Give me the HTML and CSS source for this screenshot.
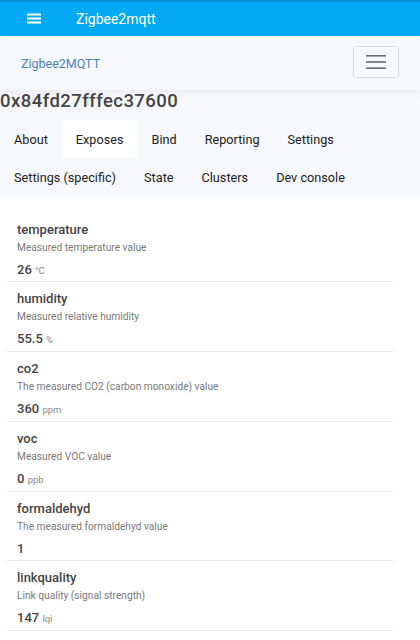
FILE: index.html
```html
<!DOCTYPE html>
<html>
<head>
<meta charset="utf-8">
<link rel="stylesheet" href="styles.css">
</head>
<body>
<header class="appbar">
  <svg class="appbar-menu" width="14" height="11" viewBox="0 0 14 11"><rect x="0" y="0.5" width="14" height="2" fill="#fff"/><rect x="0" y="4.5" width="14" height="2" fill="#fff"/><rect x="0" y="8.5" width="14" height="2" fill="#fff"/></svg>
  <span class="appbar-title">Zigbee2mqtt</span>
</header>
<nav class="navbar">
  <a class="brand">Zigbee2MQTT</a>
  <button class="toggler"><svg width="20" height="18" viewBox="0 0 20 18"><rect x="0" y="2" width="20" height="1.6" fill="#6c6c6c"/><rect x="0" y="8.2" width="20" height="1.6" fill="#6c6c6c"/><rect x="0" y="14.4" width="20" height="1.6" fill="#6c6c6c"/></svg></button>
</nav>
<h1 class="device-title">0x84fd27fffec37600</h1>
<ul class="tabs">
  <li class="tab">About</li>
  <li class="tab active">Exposes</li>
  <li class="tab">Bind</li>
  <li class="tab">Reporting</li>
  <li class="tab">Settings</li>
  <li class="tab">Settings (specific)</li>
  <li class="tab">State</li>
  <li class="tab">Clusters</li>
  <li class="tab">Dev console</li>
</ul>
<section class="card">
  <div class="expose">
    <div class="name">temperature</div>
    <div class="desc">Measured temperature value</div>
    <div class="value">26 <span class="unit">°C</span></div>
  </div>
  <div class="expose">
    <div class="name">humidity</div>
    <div class="desc">Measured relative humidity</div>
    <div class="value">55.5 <span class="unit">%</span></div>
  </div>
  <div class="expose">
    <div class="name">co2</div>
    <div class="desc">The measured CO2 (carbon monoxide) value</div>
    <div class="value">360 <span class="unit">ppm</span></div>
  </div>
  <div class="expose">
    <div class="name">voc</div>
    <div class="desc">Measured VOC value</div>
    <div class="value">0 <span class="unit">ppb</span></div>
  </div>
  <div class="expose">
    <div class="name">formaldehyd</div>
    <div class="desc">The measured formaldehyd value</div>
    <div class="value">1</div>
  </div>
  <div class="expose">
    <div class="name">linkquality</div>
    <div class="desc">Link quality (signal strength)</div>
    <div class="value">147 <span class="unit">lqi</span></div>
  </div>
</section>
</body>
</html>
```
FILE: styles.css
```css
* { box-sizing: border-box; }
html, body { margin: 0; padding: 0; }
body {
  background: #f7f8fb;
  font-family: Roboto, "Liberation Sans", sans-serif;
  color: #333;
  width: 420px;
  overflow: hidden;
}
.appbar {
  height: 36px;
  background: #03a9f4;
  border-top: 2px solid #0a98db;
  display: flex;
  align-items: center;
  padding-left: 27px;
}
.appbar-menu { display: block; margin-top: -1px; }
.appbar-title {
  color: #fff;
  font-size: 14px;
  margin-left: 35px;
  margin-top: -1px;
}
.navbar {
  height: 54px;
  background: #f7f8fb;
  display: flex;
  align-items: center;
  justify-content: space-between;
  padding: 0 21px;
  box-shadow: 0 3px 8px rgba(0, 0, 0, 0.05);
  position: relative;
}
.brand {
  color: #4a82c3;
  font-size: 12.5px;
}
.toggler {
  width: 46px;
  height: 32px;
  border: 1px solid #dedfe2;
  border-radius: 3px;
  background: #f7f8fb;
  display: flex;
  align-items: center;
  justify-content: center;
  padding: 0;
  margin-top: -2px;
}
.toggler svg { display: block; }
.device-title {
  margin: 0 0 8px;
  font-size: 18.5px;
  line-height: 22px;
  font-weight: 500;
  color: #444;
  letter-spacing: 0.45px;
}
.tabs {
  list-style: none;
  margin: 0;
  padding: 0;
  display: flex;
  flex-wrap: wrap;
}
.tab {
  height: 38px;
  line-height: 40px;
  padding: 0 14px;
  font-size: 12.7px;
  color: #222;
  border-radius: 3px;
}
.tab.active { background: #fff; }
.card {
  background: #fff;
  margin-top: 1px;
  padding: 15.5px 27px 20px 7px;
}
.expose {
  padding: 8px 10px 0.4px;
  border-bottom: 1px solid #e8eaed;
}
.name {
  font-size: 13px;
  line-height: 18px;
  font-weight: 500;
  color: #444;
}
.desc {
  font-size: 10.2px;
  line-height: 17px;
  color: #7a7a7a;
}
.value {
  margin-top: 3px;
  font-size: 13px;
  line-height: 21.6px;
  font-weight: 500;
  color: #444;
}
.unit {
  font-size: 9.5px;
  font-weight: 400;
  color: #888;
}
```
